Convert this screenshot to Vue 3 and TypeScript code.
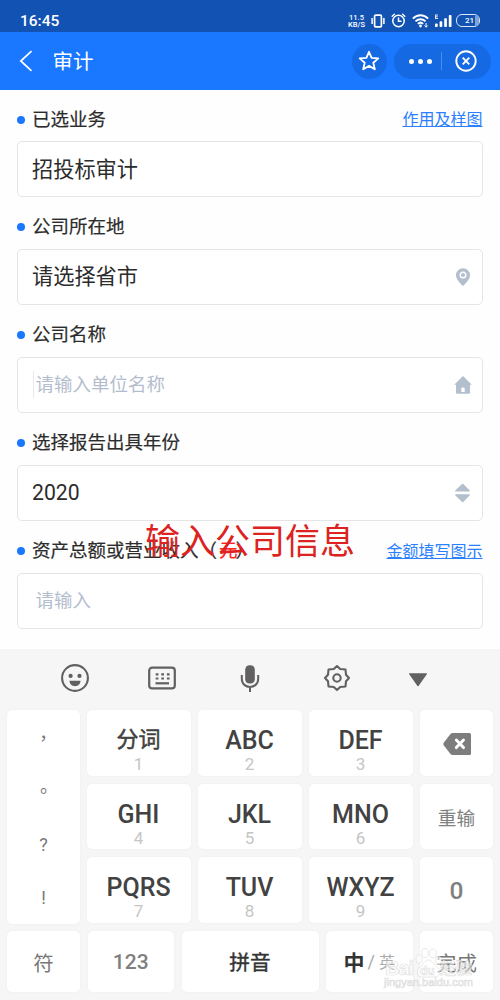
<script setup lang="ts">
interface Field {
  label: string
  unit?: string
  link?: string
  value?: string
  placeholder?: string
  caret?: boolean
  icon?: 'pin' | 'home' | 'sort'
}
interface Key {
  text: string
  digit: string
}

const fields: Field[] = [
  { label: '已选业务', link: '作用及样图', value: '招投标审计' },
  { label: '公司所在地', value: '请选择省市', icon: 'pin' },
  { label: '公司名称', placeholder: '请输入单位名称', caret: true, icon: 'home' },
  { label: '选择报告出具年份', value: '2020', icon: 'sort' },
  { label: '资产总额或营业收入', unit: '元', link: '金额填写图示', placeholder: '请输入' },
]

const punctuation: string[] = ['，', '。', '?', '!']

const keys: Key[] = [
  { text: '分词', digit: '1' },
  { text: 'ABC', digit: '2' },
  { text: 'DEF', digit: '3' },
  { text: 'GHI', digit: '4' },
  { text: 'JKL', digit: '5' },
  { text: 'MNO', digit: '6' },
  { text: 'PQRS', digit: '7' },
  { text: 'TUV', digit: '8' },
  { text: 'WXYZ', digit: '9' },
]
</script>

<template>
  <div class="screen">
    <div class="status">
      <span class="time">16:45</span>
      <div class="indicators">
        <div class="speed"><span>11.5</span><span>KB/S</span></div>
        <svg class="i-vibrate" width="14" height="14" viewBox="0 0 14 14" fill="none" stroke="#fff" stroke-width="1.7">
          <rect x="3.600" y="1.200" width="6.800" height="11.600" rx="1" />
          <path d="M1.100 4v6M12.900 4v6" stroke-width="1.500" />
        </svg>
        <svg class="i-alarm" width="15" height="15" viewBox="0 0 15 15" fill="none" stroke="#fff" stroke-width="1.500" stroke-linecap="round">
          <circle cx="7.500" cy="8" r="5.700" />
          <path d="M7.500 5v3.300H10M1.200 3.200l2.200-2M13.800 3.200l-2.200-2" />
        </svg>
        <svg class="i-wifi" width="17" height="14" viewBox="0 0 17 14" fill="none" stroke="#fff" stroke-width="1.900">
          <path d="M.9 4.600C5.300 .1 11.700 .1 16.100 4.600M3.500 7.400c2.900-2.900 7.100-2.900 10 0M5.900 9.900c1.500-1.500 3.700-1.500 5.200 0" />
          <circle cx="8.500" cy="12" r="1.400" fill="#fff" stroke="none" />
          <path d="M14.100 9v4.200M12.500 11.500l1.600 1.700 1.600-1.700" stroke-width="1" />
        </svg>
        <svg class="i-signal" width="18" height="14" viewBox="0 0 18 14" fill="#fff">
          <path d="M1 .5h3v1H2v.8h1.800v1H2v.8h2v1H1z" opacity=".85" />
          <rect x="1" y="9.500" width="2.700" height="3.500" rx=".8" />
          <rect x="5.600" y="7.300" width="2.700" height="5.700" rx=".8" />
          <rect x="10.200" y="4.300" width="2.700" height="8.700" rx=".8" />
          <rect x="14.800" y="1" width="2.700" height="12" rx=".8" />
        </svg>
        <div class="battery"><span>21</span><i></i></div>
      </div>
    </div>

    <header class="header">
      <svg class="back" width="14" height="22" viewBox="0 0 14 22" fill="none" stroke="#fff" stroke-width="1.700">
        <path d="M12.500 1.200L1.800 11l10.700 9.800" />
      </svg>
      <h1>审计</h1>
      <div class="round">
        <svg width="22" height="22" viewBox="0 0 22 22" fill="none" stroke="#fff" stroke-width="1.800" stroke-linejoin="round">
          <path d="M11 1.800l2.600 6 6.700.6-5 4.400 1.500 6.500-5.800-3.400-5.800 3.400 1.500-6.500-5-4.400 6.700-.6z" />
        </svg>
      </div>
      <div class="capsule">
        <div class="dots"><i></i><i></i><i></i></div>
        <span class="bar"></span>
        <svg width="22" height="22" viewBox="0 0 22 22" fill="none" stroke="#fff" stroke-width="1.900">
          <circle cx="11" cy="11" r="9.700" />
          <path d="M7.700 7.700l6.600 6.600M14.300 7.700l-6.600 6.600" />
        </svg>
      </div>
    </header>

    <main class="form">
      <section v-for="f in fields" :key="f.label" class="group">
        <div class="caption">
          <i class="dot"></i>
          <span class="label">{{ f.label }}<template v-if="f.unit">（<b>{{ f.unit }}</b>）</template></span>
          <a v-if="f.link" class="link">{{ f.link }}</a>
        </div>
        <div class="field">
          <span v-if="f.value" class="value">{{ f.value }}</span>
          <template v-else>
            <i class="caret" :class="{ shown: f.caret }"></i>
            <span class="placeholder">{{ f.placeholder }}</span>
          </template>
          <svg v-if="f.icon" class="ficon" width="18" height="20" viewBox="0 0 18 20" fill="#b4bfcd">
            <path v-if="f.icon === 'pin'" fill-rule="evenodd" d="M9 1.200a7 7 0 0 0-7 7c0 4 4.200 8 7 10.700 2.800-2.700 7-6.700 7-10.700a7 7 0 0 0-7-7zm0 3.300a3.500 3.500 0 1 1 0 7 3.500 3.500 0 0 1 0-7zm0 1.400a2.100 2.100 0 1 0 0 4.200 2.100 2.100 0 0 0 0-4.200z" />
            <path v-else-if="f.icon === 'home'" fill-rule="evenodd" d="M9 .9L17.800 9.800H16v7.700a1.200 1.200 0 0 1-1.200 1.200H3.200A1.200 1.200 0 0 1 2 17.500V9.800H.2zM7.300 17h3.400v-3.300a1.300 1.300 0 0 0-1.300-1.300h-.8a1.300 1.300 0 0 0-1.300 1.300z" />
            <path v-else d="M8.300.8L1.200 7.600q-.4.900.6.900h13.400q1 0 .6-.9L9 .8zM1.800 11.300q-1 0-.6.900l7.100 7h.7l6.800-7q.4-.9-.6-.9z" />
          </svg>
        </div>
      </section>
      <div class="banner">输入公司信息</div>
    </main>

    <div class="keyboard">
      <div class="tools">
        <svg width="30" height="30" viewBox="0 0 30 30" fill="none" stroke="#626060" stroke-width="2.100">
          <circle cx="15" cy="15" r="12.900" />
          <circle cx="10.600" cy="12.900" r="2.100" fill="#626060" stroke="none" />
          <circle cx="19.500" cy="12.900" r="2.100" fill="#626060" stroke="none" />
          <path d="M9.500 17.800h11c0 7.200-11 7.200-11 0z" fill="#626060" stroke="none" />
        </svg>
        <svg width="30" height="30" viewBox="0 0 30 30" fill="none" stroke="#626060" stroke-width="2.200">
          <rect x="2.200" y="4.600" width="25.600" height="20.800" rx="3" />
          <path d="M8.700 11.300h14M8.700 15.500h14" stroke-dasharray="2.700 2.900" />
          <path d="M8.500 20.300h13.500" />
        </svg>
        <svg width="30" height="30" viewBox="0 0 30 30" fill="none" stroke="#626060" stroke-width="2">
          <rect x="10.200" y="2.200" width="9.600" height="18.300" rx="4.300" fill="#626060" stroke="none" />
          <path d="M6.800 12v3.800c0 10.800 16.400 10.800 16.400 0V12M15 23.800V29" />
        </svg>
        <svg width="30" height="30" viewBox="0 0 30 30" fill="none" stroke="#626060" stroke-width="2.100" stroke-linejoin="round">
          <path d="M15 3l3.200 3 5.300.5.500 5.300 3 3.200-3 3.200-.5 5.300-5.300.5-3.200 3-3.200-3-5.300-.5-.5-5.300-3-3.200 3-3.200.5-5.300 5.300-.5z" />
          <circle cx="15" cy="15" r="3.700" />
        </svg>
        <svg width="30" height="30" viewBox="0 0 30 30" fill="#626060">
          <path d="M6.700 10.200h16.600q1.300 0 .5 1l-7.900 11.400q-.9 1.100-1.800 0L6.200 11.200q-.8-1 .5-1z" />
        </svg>
      </div>
      <div class="upper">
        <div class="key punct"><span v-for="p in punctuation" :key="p">{{ p }}</span></div>
        <div class="letters">
          <div v-for="k in keys" :key="k.digit" class="key letter" :class="{ han: k.digit === '1' }">
            <span class="main">{{ k.text }}</span>
            <span class="digit">{{ k.digit }}</span>
          </div>
        </div>
        <div class="side">
          <div class="key erase">
            <svg width="28" height="22" viewBox="0 0 28 22">
              <path d="M9.500 0H26.500Q28 0 28 1.500V20.500Q28 22 26.500 22H9.500Q8.300 22 7.500 21L.7 12.200Q0 11 .7 9.800L7.500 1Q8.300 0 9.500 0z" fill="#7d7d7d" />
              <path d="M13.300 7l7.200 7.600M20.500 7l-7.200 7.600" stroke="#fff" stroke-width="2.900" stroke-linecap="round" />
            </svg>
          </div>
          <div class="key redo">重输</div>
          <div class="key zero">0</div>
        </div>
      </div>
      <div class="lower">
        <div class="key symbol">符</div>
        <div class="key nums">123</div>
        <div class="key pinyin">拼音</div>
        <div class="key lang"><b>中</b><i>/</i><span>英</span></div>
        <div class="key done">完成</div>
      </div>
      <div class="watermark">
        <svg width="92" height="46" viewBox="0 0 92 46">
          <g fill="#fff" fill-opacity=".55" stroke="#d6d6d6" stroke-opacity=".8" stroke-width=".7">
            <ellipse cx="36" cy="16" rx="3" ry="4.200" />
            <ellipse cx="42" cy="10" rx="3.200" ry="4.600" />
            <ellipse cx="50" cy="10.500" rx="3.200" ry="4.600" />
            <ellipse cx="55.500" cy="17.500" rx="3" ry="4.200" />
            <path d="M45 17c-4 0-5 5-8 7-4 3-4 10 2 10h13c6 0 6-7 2-10-3-2-5-7-9-7z" />
            <text x="2" y="32" class="wm-name" textLength="29">Bai</text>
            <text x="37" y="31.500" class="wm-du">du</text>
            <text x="57" y="31" class="wm-cn">经验</text>
            <text x="1" y="43" class="wm-url" textLength="89">jingyan.baidu.com</text>
          </g>
        </svg>
      </div>
    </div>
  </div>
</template>

<style>
body {
  background: #fff;
}
</style>

<style scoped>
* {
  box-sizing: border-box;
}
.screen {
  width: 500px;
  height: 1000px;
  overflow: hidden;
  display: flex;
  flex-direction: column;
  background: #fefefe;
  color: #2c2c2c;
  font-family: Roboto, "Noto Sans CJK SC", sans-serif;
}
i,
b {
  font-style: normal;
}
svg {
  display: block;
  flex: none;
}
.status {
  height: 32px;
  flex: none;
  background: #1152b3;
  color: #fff;
  display: flex;
  justify-content: space-between;
  padding: 8px 20px 0;
}
.time {
  font-size: 15.500px;
  font-weight: 500;
  line-height: 27px;
}
.indicators {
  display: flex;
  align-items: center;
  height: 25px;
}
.speed {
  width: 17px;
  display: flex;
  flex-direction: column;
  align-items: center;
  font-size: 7.500px;
  font-weight: 500;
  line-height: 7px;
  padding-top: 1px;
}
.i-vibrate {
  margin-left: 6px;
}
.i-alarm {
  margin-left: 6px;
}
.i-wifi {
  margin-left: 6px;
}
.i-signal {
  margin-left: 5px;
}
.battery {
  margin-left: 4px;
  width: 24px;
  height: 13px;
  border: 1.500px solid #dce7f7;
  border-radius: 6px;
  display: flex;
  justify-content: flex-end;
  align-items: center;
  font-size: 8px;
  font-weight: 500;
  line-height: 10px;
}
.battery i {
  width: 4px;
  height: 10px;
  margin-left: 1px;
  background: #7fa4d8;
  border-radius: 0 4px 4px 0;
}
.header {
  height: 58px;
  flex: none;
  background: #1a77ff;
  color: #fff;
  display: flex;
  align-items: center;
  padding: 0 9.500px 0 19px;
}
h1 {
  margin: 0 auto 0 19.500px;
  padding-top: 1px;
  font-size: 20.500px;
  font-weight: 400;
  line-height: 28px;
}
.round {
  width: 35px;
  height: 35px;
  border-radius: 50%;
  background: #156ae4;
  display: flex;
  align-items: center;
  justify-content: center;
}
.capsule {
  margin-left: 7px;
  width: 97px;
  height: 35px;
  border-radius: 18px;
  background: #156ae4;
  display: flex;
  align-items: center;
  padding-left: 15px;
}
.dots {
  display: flex;
  gap: 4px;
}
.dots i {
  width: 5px;
  height: 5px;
  border-radius: 50%;
  background: #fff;
}
.bar {
  width: 1px;
  height: 18px;
  margin: 0 13px 0 9.500px;
  background: #4c8dec;
}
.form {
  position: relative;
  height: 559px;
  flex: none;
  padding: 4px 17.500px 0 17px;
}
.group {
  height: 107.900px;
  display: flex;
  flex-direction: column;
}
.caption {
  height: 47px;
  display: flex;
  align-items: center;
}
.dot {
  width: 8px;
  height: 8px;
  margin: 4px 7px 0 0;
  border-radius: 50%;
  background: #1a77ff;
}
.label {
  font-size: 18.500px;
  line-height: 28px;
  margin-top: 4px;
  -webkit-text-stroke: 0.200px currentColor;
}
.label b {
  color: #f22;
  font-weight: 400;
  margin: 0 -2px 0 2px;
}
.link {
  margin-left: auto;
  margin-top: 5px;
  font-size: 16px;
  line-height: 24px;
  color: #2a80ff;
  text-decoration: underline;
  text-underline-offset: 1px;
}
.field {
  height: 56px;
  border: 1.500px solid #e5e5e5;
  border-radius: 5px;
  background: #fff;
  display: flex;
  align-items: center;
  padding: 0 9.500px 0 14px;
}
.value {
  font-size: 21.200px;
  line-height: 30px;
  padding-top: 1px;
}
.caret {
  width: 1px;
  height: 27px;
  margin: 0 1.500px 0 1px;
}
.caret.shown {
  background: #e6e8ec;
}
.placeholder {
  font-size: 18.500px;
  line-height: 28px;
  color: #b3bdcd;
}
.ficon {
  margin-left: auto;
}
.banner {
  position: absolute;
  left: 145px;
  top: 428px;
  font-size: 35px;
  line-height: 50px;
  color: #dd2222;
  white-space: nowrap;
}
.keyboard {
  position: relative;
  flex: 1;
  background: #f6f6f6;
  padding: 0 7px;
}
.tools {
  height: 61px;
  display: flex;
  gap: 57.500px;
  padding: 14px 0 0 52.500px;
}
.tools svg:last-child {
  margin-left: -6.500px;
}
.key {
  background: #fff;
  border-radius: 5px;
  box-shadow: 0 0 2px #e6ebef;
  display: flex;
  align-items: center;
  justify-content: center;
}
.upper {
  display: grid;
  grid-template-columns: 73px 326px 73px;
  column-gap: 7px;
  height: 212.500px;
}
.punct {
  flex-direction: column;
  justify-content: flex-start;
  font-size: 18px;
  color: #777;
  font-family: Roboto, "Noto Sans CJK TC", sans-serif;
  padding-top: 1.500px;
}
.punct span {
  height: 53px;
  line-height: 53px;
}
.letters {
  display: grid;
  grid-template-columns: repeat(3, 104px);
  grid-template-rows: repeat(3, 65.500px);
  gap: 8px 7px;
  margin-left: -0.500px;
}
.letter {
  flex-direction: column;
  justify-content: flex-start;
}
.main {
  margin-top: 16px;
  font-size: 25px;
  font-weight: 500;
  line-height: 30px;
  color: #424242;
}
.digit {
  font-size: 17px;
  line-height: 16px;
  color: #c5c5c5;
}
.han .main {
  font-size: 22px;
  margin-top: 15px;
  margin-bottom: 1px;
  font-weight: 400;
  -webkit-text-stroke: 0.500px currentColor;
}
.side {
  display: grid;
  grid-template-rows: repeat(3, 65.500px);
  row-gap: 8px;
}
.erase {
  padding-top: 2px;
}
.redo {
  font-size: 18.700px;
  color: #808080;
}
.zero {
  font-size: 24.500px;
  font-weight: 500;
  color: #808080;
  padding-top: 1px;
}
.lower {
  display: grid;
  grid-template-columns: 73px 86.500px 137px 86.500px 73px;
  column-gap: 7.500px;
  height: 61px;
  margin-top: 8.500px;
}
.symbol,
.done {
  font-size: 20.500px;
  color: #777;
}
.nums {
  font-size: 21px;
  font-weight: 500;
  color: #808080;
  padding-top: 1px;
}
.pinyin {
  font-size: 20.700px;
  color: #333;
  padding-bottom: 2px;
  -webkit-text-stroke: 0.400px currentColor;
}
.lang {
  padding-bottom: 1px;
}
.lang b {
  font-size: 21px;
  font-weight: 700;
  color: #333;
}
.lang i {
  font-size: 18px;
  color: #aaa;
  margin: 0 4px 0 3px;
}
.lang span {
  font-size: 16px;
  color: #aaa;
}
.watermark {
  position: absolute;
  left: 383px;
  top: 294px;
}
.wm-name {
  font: 700 20px "Liberation Sans", sans-serif;
}
.wm-du {
  font: 700 12px "Liberation Sans", sans-serif;
}
.wm-cn {
  font: 700 16px "Noto Sans CJK SC", sans-serif;
}
.wm-url {
  font: 400 11px "Liberation Sans", sans-serif;
}
</style>
